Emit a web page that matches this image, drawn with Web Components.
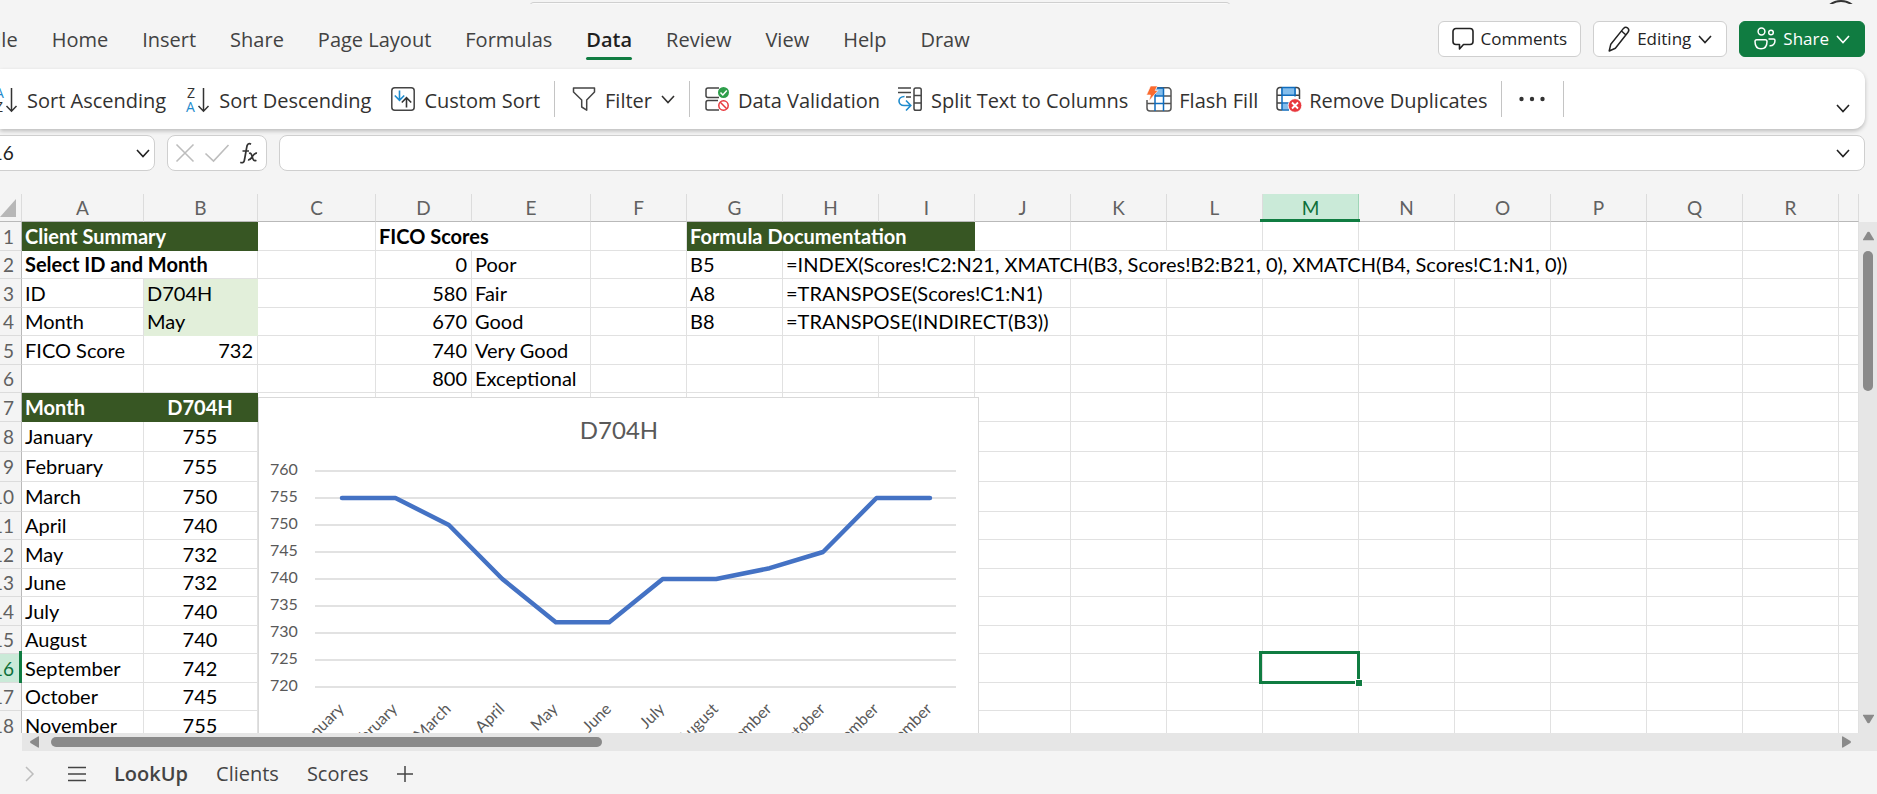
<!DOCTYPE html>
<html lang="en">
<head>
<meta charset="utf-8">
<meta name="viewport" content="width=device-width, initial-scale=1">
<title>Client scores - LookUp</title>
<style>
  html, body { height: 100%; margin: 0; }
  body {
    background: #f4f4f4; color: #323130; overflow: hidden;
    font: 20px/28px "Open Sans", "Noto Sans", sans-serif;
    --accent: #107c41; --line: #e1e1e1; --edge: #cfcfcf;
    --grid-font: Lato, "Liberation Sans", sans-serif;
  }
</style>
</head>
<body>
<workbook-app></workbook-app>

<script>
const make = (tag, html) => customElements.define(tag, class extends HTMLElement {
  constructor() {
    super();
    this.attachShadow({ mode: 'open' });
    this.shadowRoot.innerHTML = html;
  }
});

const ICONS = {
  chevron: '<svg width="14" height="14" viewBox="0 0 14 14"><path d="M1 4l6 6.500 6-6.500" stroke="currentColor" stroke-width="1.600"/></svg>',
  next: '<svg width="12" height="16" viewBox="0 0 12 16"><path d="M2 1l7 7-7 7" stroke="#bdbdbd" stroke-width="1.500"/></svg>',
  menu: '<svg width="18" height="16" viewBox="0 0 18 16"><path d="M0 1.500h18M0 8h18M0 14.500h18" stroke="#444" stroke-width="1.500"/></svg>',
  plus: '<svg width="18" height="18" viewBox="0 0 18 18"><path d="M9 1v16M1 9h16" stroke="#444" stroke-width="1.500"/></svg>',
  cross: '<svg width="20" height="20" viewBox="0 0 20 20"><path d="M1.500 1.500l17 17M18.500 1.500l-17 17" stroke="#bdbdbd" stroke-width="1.600"/></svg>',
  check: '<svg width="26" height="20" viewBox="0 0 26 20"><path d="M1.500 10.500l8 7.500L24.500 2" stroke="#bdbdbd" stroke-width="1.600"/></svg>',
  fx: '<svg width="20" height="24" viewBox="0 0 20 24" stroke="#333"><path d="M12 3.200c-1.500-1-3.200-.6-3.900 1.400-.5 1.400-2.200 13-2.900 15.300-.6 1.900-2.300 2.300-3.900 1.400M3.500 10h6.500" stroke-width="1.700"/><path d="M10 12.500c1.800-.9 2.500.5 3.200 3.200.8 3.200 1.800 4.800 4.200 3.500M18 12.200c-2.200-.4-3.500 1.500-4.700 3.400-1.200 2-2.200 3.800-4.300 3.300" stroke-width="1.700"/></svg>',
  comment: '<svg width="22" height="24" viewBox="0 0 22 24"><path d="M4 1.500h14a3 3 0 0 1 3 3v10a3 3 0 0 1-3 3h-6.500L7.500 22v-4.500H4a3 3 0 0 1-3-3v-10a3 3 0 0 1 3-3z" stroke="#222" stroke-width="1.600" stroke-linejoin="round"/></svg>',
  pencil: '<svg width="22" height="26" viewBox="0 0 22 26"><path d="M1.200 25l1.600-6.800L15.500 2.400c1.200-1.300 3-1.400 4.200-.4 1.200 1.100 1.400 2.800.3 4.200L7.400 22.200zM13.500 5l4.500 4" stroke="#222" stroke-width="1.500" stroke-linejoin="round"/></svg>',
  people: '<svg width="22" height="24" viewBox="0 0 22 24" stroke="#fff" stroke-width="1.500"><circle cx="7.500" cy="4.500" r="3.400"/><circle cx="17" cy="5.500" r="2.300"/><path d="M1 14.500c0-1 .7-1.800 1.800-1.800h8.400c1.100 0 1.800.8 1.800 1.800 0 5-2.500 7.300-6 7.300s-6-2.300-6-7.300zM14.500 12h5c.9 0 1.500.6 1.500 1.500 0 3.200-2 5.500-5.500 5.200"/></svg>',
  asc: '<svg width="24" height="24" viewBox="0 0 24 24"><text x="1" y="11" font-size="14" fill="#1e8bcd">A</text><text x="1" y="25" font-size="14" fill="#333">Z</text><path d="M17.500 1v23M12.500 19l5 5.200 5-5.200" stroke="#333" stroke-width="1.500"/></svg>',
  desc: '<svg width="24" height="24" viewBox="0 0 24 24"><text x="1" y="11" font-size="14" fill="#333">Z</text><text x="0" y="25" font-size="14" fill="#1e8bcd">A</text><path d="M17.500 1v23M12.500 19l5 5.200 5-5.200" stroke="#333" stroke-width="1.500"/></svg>',
  custom: '<svg width="24" height="24" viewBox="0 0 24 24"><rect x=".8" y=".8" width="22.400" height="22.400" rx="3" stroke="#444" stroke-width="1.500"/><path d="M8.500 3.500v9.500M3.800 8.500l4.700 4.800 4.700-4.800" stroke="#1e8bcd" stroke-width="1.600"/><path d="M15.500 20.500V11M10.800 15.500l4.700-4.800 4.700 4.800" stroke="#333" stroke-width="1.600"/></svg>',
  filter: '<svg width="24" height="24" viewBox="0 0 24 24"><path d="M1.500 1h21v4l-7.800 8v10.200l-5-3.200v-7L1.500 5z" stroke="#444" stroke-width="1.500" stroke-linejoin="round"/></svg>',
  validate: '<svg width="24" height="24" viewBox="0 0 24 24"><path d="M14 1H3a2 2 0 0 0-2 2v5.500a2 2 0 0 0 2 2h11M13 13.500H3a2 2 0 0 0-2 2V21a2 2 0 0 0 2 2h11" stroke="#444" stroke-width="1.500"/><circle cx="18.500" cy="5.500" r="5.500" fill="#2e9e4b"/><path d="M15.500 5.500l2.300 2.400 4-4.500" stroke="#fff" stroke-width="1.500"/><circle cx="18.500" cy="18.500" r="4.700" stroke="#e8383d" stroke-width="1.500"/><path d="M15.300 15.300l6.400 6.400" stroke="#e8383d" stroke-width="1.500"/></svg>',
  split: '<svg width="24" height="24" viewBox="0 0 24 24"><path d="M0 1h13M0 5.500h13M8 10h5" stroke="#444" stroke-width="1.500"/><rect x="16" y="1" width="7.200" height="22.200" rx="1.800" stroke="#444" stroke-width="1.500"/><path d="M16 8.500h7M16 16h7" stroke="#444" stroke-width="1.500"/><path d="M6.500 9.500C3 9.500 1 11.500 1 14s2 4.500 5 4.500h6M8 13.500l4.800 5-4.800 5" stroke="#1e8bcd" stroke-width="1.600"/></svg>',
  flash: '<svg width="24" height="26" viewBox="0 0 24 26"><path d="M9 2h8v8H9z" fill="#83bdec"/><path d="M11 1.800h11a3 3 0 0 1 3 3V22a3 3 0 0 1-3 3H4a3 3 0 0 1-3-3v-8M1 17.500h8M17.500 10H25M17.500 17.500H25" stroke="#555" stroke-width="1.500"/><path d="M9 8v17M17.500 2v23M9 10h8.500M9 17.500h8.500M11 2h6" stroke="#0f6cbd" stroke-width="1.500"/><path d="M4.500 0h7L9.200 4.500H12L3 15l1.500-6H.5z" fill="#fa6a2e" stroke="#fff" stroke-width=".6"/></svg>',
  dedupe: '<svg width="24" height="26" viewBox="0 0 24 26"><path d="M5 2h15v7H5zM6 17.500h7v6H6z" fill="#83bdec"/><path d="M6 1.500H4a3 3 0 0 0-3 3V21a3 3 0 0 0 3 3h2M19 1.500h1.500a3 3 0 0 1 3 3V13M1 9.200h5M1 17h5M19 9.200h4" stroke="#444" stroke-width="1.500"/><path d="M6 1.500h13M6 1.500V24M19 1.500v9M6 9.200h13M6 17h7M6 24h7" stroke="#0f6cbd" stroke-width="1.500"/><circle cx="19" cy="19.500" r="6.800" fill="#e8383d" stroke="#fff" stroke-width=".8"/><path d="M16 16.500l6 6M22 16.500l-6 6" stroke="#fff" stroke-width="1.800"/></svg>',
  more: '<svg width="26" height="6" viewBox="0 0 26 6"><g fill="#333"><circle cx="2.500" cy="3" r="2.200"/><circle cx="13" cy="3" r="2.200"/><circle cx="23.500" cy="3" r="2.200"/></g></svg>'
};

customElements.define('ui-icon', class extends HTMLElement {
  constructor() {
    super();
    this.attachShadow({ mode: 'open' });
    this.shadowRoot.innerHTML = `<style>
      :host { display: inline-flex; flex: none; }
      svg { display: block; fill: none; overflow: visible; }
      text { font-family: "Open Sans", sans-serif; }
    </style>${ICONS[this.getAttribute('name')] || ''}`;
  }
});

make('title-strip', `<style>
  :host { display: grid; grid-template-columns: 529fr 702fr 646fr; align-items: end; height: 4px; overflow: hidden; }
  input { grid-column: 2; box-sizing: border-box; width: 100%; height: 36px; border: 1px solid var(--edge);
    border-bottom-width: 2px; border-radius: 5px; background: #fafafa; }
  button { justify-self: end; box-sizing: border-box; width: 38px; height: 38px; margin-right: 17px; padding: 0;
    border: 2px solid #333; border-radius: 50%; background: none; }
</style><input type="search" aria-label="Search"><button type="button" aria-label="Account"></button>`);

make('ribbon-tabs', `<style>
  :host { display: block; min-width: 0; }
  nav { display: flex; gap: 34px; margin-left: -14px; }
  a { position: relative; color: #424242; text-decoration: none; line-height: 38px; white-space: nowrap; }
  a[aria-current] { color: #1f1f1f; font-weight: 600; }
  a[aria-current]::after { content: ""; position: absolute; inset: auto 0 -1px; height: 3px; border-radius: 2px; background: var(--accent); }
</style><nav aria-label="Ribbon tabs">
  <a href="#file">File</a><a href="#home">Home</a><a href="#insert">Insert</a><a href="#share">Share</a><a href="#layout">Page Layout</a><a href="#formulas">Formulas</a><a href="#data" aria-current="page">Data</a><a href="#review">Review</a><a href="#view">View</a><a href="#help">Help</a><a href="#draw">Draw</a>
</nav>`);

make('action-button', `<style>
  :host { display: block; }
  button { box-sizing: border-box; display: flex; align-items: center; gap: 7px; height: 36px; padding: 0 13px;
    border: 1px solid var(--edge); border-radius: 6px; background: #fff; color: #242424;
    font-family: inherit; font-size: 17px; line-height: 24px; white-space: nowrap; }
  :host([menu]) button { padding: 0 14px; }
  :host([primary]) button { background: var(--accent); border-color: var(--accent); color: #fff; }
</style><button type="button"><slot></slot></button>`);

make('ribbon-button', `<style>
  :host { display: block; }
  button { display: flex; align-items: center; gap: 9px; height: 40px; padding: 0 10px; border: 0; background: none;
    color: #323130; font: inherit; white-space: nowrap; }
  :host([compact]) button { padding-left: 8px; }
  span { padding-top: 4px; }
</style><button type="button"><slot name="icon"></slot><span><slot></slot></span><slot name="end"></slot></button>`);

make('ribbon-panel', `<style>
  :host { display: flex; align-items: center; height: 60px; margin-right: 12px; border-radius: 0 12px 12px 0;
    background: #fff; box-shadow: 0 2px 4px rgba(0,0,0,.24); }
  div { display: flex; align-items: center; margin-left: -16px; }
  hr { width: 1px; height: 36px; margin: 0 7px 0 4px; border: 0; background: #c4c4c4; }
  .bare { display: flex; padding: 0 14px 0 10px; border: 0; background: none; color: #222; }
  .collapse { align-self: flex-end; margin: 0 0 14px auto; padding-right: 15px; }
</style>
<div role="toolbar" aria-label="Data">
  <ribbon-button><ui-icon slot="icon" name="asc"></ui-icon>Sort Ascending</ribbon-button>
  <ribbon-button><ui-icon slot="icon" name="desc"></ui-icon>Sort Descending</ribbon-button>
  <ribbon-button><ui-icon slot="icon" name="custom"></ui-icon>Custom Sort</ribbon-button>
  <hr>
  <ribbon-button><ui-icon slot="icon" name="filter"></ui-icon>Filter<ui-icon slot="end" name="chevron"></ui-icon></ribbon-button>
  <hr>
  <ribbon-button compact><ui-icon slot="icon" name="validate"></ui-icon>Data Validation</ribbon-button>
  <ribbon-button compact><ui-icon slot="icon" name="split"></ui-icon>Split Text to Columns</ribbon-button>
  <ribbon-button compact><ui-icon slot="icon" name="flash"></ui-icon>Flash Fill</ribbon-button>
  <ribbon-button compact><ui-icon slot="icon" name="dedupe"></ui-icon>Remove Duplicates</ribbon-button>
  <hr>
  <button class="bare" type="button" aria-label="More options"><ui-icon name="more"></ui-icon></button>
  <hr>
</div>
<button class="bare collapse" type="button" aria-label="Collapse ribbon"><ui-icon name="chevron"></ui-icon></button>`);

make('formula-bar', `<style>
  :host { display: flex; gap: 12px; margin-right: 12px; }
  div { box-sizing: border-box; display: flex; align-items: center; height: 36px; border: 1px solid var(--edge);
    border-radius: 8px; background: #fff; }
  input { flex: 1; min-width: 0; border: 0; outline: 0; background: none; font: 19px/28px var(--grid-font); color: #222; }
  button { display: flex; padding: 0; border: 0; background: none; color: #222; }
  .name { width: 184px; margin-left: -29px; padding-right: 4px; }
  .tools { gap: 9px; padding: 0 7px; }
  .formula { flex: 1; padding: 0 14px 0 10px; }
</style>
<div class="name"><input aria-label="Name box" value="M16"><button type="button" aria-label="Named ranges"><ui-icon name="chevron"></ui-icon></button></div>
<div class="tools"><button type="button" aria-label="Cancel"><ui-icon name="cross"></ui-icon></button><button type="button" aria-label="Enter"><ui-icon name="check"></ui-icon></button><button type="button" aria-label="Insert function"><ui-icon name="fx"></ui-icon></button></div>
<div class="formula"><input aria-label="Formula"><button type="button" aria-label="Expand formula bar"><ui-icon name="chevron"></ui-icon></button></div>`);

const MONTHS = ['January','February','March','April','May','June','July','August','September','October','November','December'];
const SCORES = [755,755,750,740,732,732,740,740,742,745,755,755];

customElements.define('score-chart', class extends HTMLElement {
  constructor() {
    super();
    const x = i => 83 + i * 53.45, y = v => 73 + (760 - v) * 5.4;
    const ticks = [760,755,750,745,740,735,730,725,720];
    this.attachShadow({ mode: 'open' }).innerHTML = `<style>
      :host { display: block; box-sizing: border-box; border: 1px solid #d9d9d9; background: #fff; }
      svg { display: block; }
      text { font-family: var(--grid-font); font-size: 16px; fill: #595959; }
      .title { font-size: 24px; }
    </style>
    <svg width="719" height="396" viewBox="0 0 719 396" role="img" aria-label="D704H scores by month">
      <text class="title" x="360" y="41" text-anchor="middle">D704H</text>
      ${ticks.map(t => `<text x="11" y="${y(t) + 4}">${t}</text><path d="M56 ${y(t)}H697" stroke="#d9d9d9" stroke-width="1.500"/>`).join('')}
      <polyline points="${SCORES.map((s, i) => x(i) + ',' + y(s)).join(' ')}" fill="none" stroke="#4472c4" stroke-width="4.500" stroke-linecap="round" stroke-linejoin="round"/>
      ${MONTHS.map((m, i) => `<text text-anchor="end" transform="translate(${x(i) + 3} 312) rotate(-45)">${m}</text>`).join('')}
    </svg>`;
  }
});

/* Each cell: column letter, text, then optional span and class names. */
const CELLS = {
  1: [['A','Client Summary',2,'dark'],['D','FICO Scores',2,'bold'],['G','Formula Documentation',3,'dark']],
  2: [['A','Select ID and Month',2,'bold'],['D','0',1,'num'],['E','Poor'],['G','B5'],['H','=INDEX(Scores!C2:N21, XMATCH(B3, Scores!B2:B21, 0), XMATCH(B4, Scores!C1:N1, 0))',9]],
  3: [['A','ID'],['B','D704H',1,'pick'],['D','580',1,'num'],['E','Fair'],['G','A8'],['H','=TRANSPOSE(Scores!C1:N1)',3]],
  4: [['A','Month'],['B','May',1,'pick'],['D','670',1,'num'],['E','Good'],['G','B8'],['H','=TRANSPOSE(INDIRECT(B3))',3]],
  5: [['A','FICO Score'],['B','732',1,'num'],['D','740',1,'num'],['E','Very Good']],
  6: [['D','800',1,'num'],['E','Exceptional']],
  7: [['A','Month',1,'dark'],['B','D704H',1,'dark mid']]
};
MONTHS.slice(0, 11).forEach((m, i) => { CELLS[8 + i] = [['A', m], ['B', SCORES[i], 1, 'mid']]; });
const LETTERS = 'ABCDEFGHIJKLMNOPQR'.split('');
const HEIGHTS = [29,28,29,28,29,28,29,30,30,30,28,29,28,29,28,29,28,29];

customElements.define('sheet-grid', class extends HTMLElement {
  constructor() {
    super();
    const widths = [22,122,114,118,96,119].concat(Array(13).fill(96));
    const row = n => {
      let html = `<tr style="height:${HEIGHTS[n - 1]}px"><th scope="row"${n === 16 ? ' class="on"' : ''}><div>${n}</div></th>`;
      for (let i = 0; i < 19;) {
        const c = (CELLS[n] || []).find(k => k[0] === LETTERS[i]);
        if (c) {
          const span = c[2] || 1;
          html += `<td${span > 1 ? ` colspan="${span}"` : ''}${c[3] ? ` class="${c[3]}"` : ''}>${c[1]}</td>`;
          i += span;
        } else {
          html += n === 16 && LETTERS[i] === 'M' ? '<td class="active"><i></i></td>' : '<td></td>';
          i++;
        }
      }
      return html + '</tr>';
    };
    this.attachShadow({ mode: 'open' }).innerHTML = `<style>
      :host { display: block; position: relative; overflow: hidden; min-width: 0; min-height: 0; background: #fff; }
      table { width: 100%; table-layout: fixed; border-collapse: separate; border-spacing: 0;
        font: 20px/27px var(--grid-font); color: #000; }
      th, td { box-sizing: border-box; padding: 0 4px 0 3px; white-space: nowrap; vertical-align: middle;
        border: 0 solid var(--line); border-width: 0 1px 1px 0; text-align: left; }
      th { background: #f4f4f4; color: #616161; font-size: 19px; font-weight: 400; border-color: #dcdcdc; }
      thead th { position: relative; height: 28px; padding: 0; text-align: center; border-bottom-color: #b9b9b9; }
      tbody th { padding: 0; border-right-color: #b9b9b9; position: relative; }
      tbody th div { display: flex; justify-content: flex-end; padding-right: 7px; overflow: hidden; }
      thead svg { display: block; }
      .on { background: #caead8; color: #0e703a; border-right-color: #9fd5b7; }
      thead .on::after { content: ""; position: absolute; inset: auto -2px -1px -3px; height: 3px; background: var(--accent); z-index: 1; }
      tbody .on::after { content: ""; position: absolute; inset: -3px -1px -1px auto; width: 3px; background: var(--accent); z-index: 1; }
      .num { text-align: right; }
      .mid { text-align: center; }
      .bold, .dark { font-weight: 700; }
      .dark { background: #375623; color: #fff; border-color: #375623; }
      .pick { background: #e2efda; border-color: #e2efda; }
      .active { position: relative; }
      .active i { position: absolute; inset: -3px -2px -2px -4px; border: 3px solid var(--accent); }
      .active i::after { content: ""; position: absolute; right: -6px; bottom: -6px; width: 6px; height: 6px;
        background: var(--accent); border: 1px solid #fff; }
      score-chart { position: absolute; top: 203px; left: 258px; }
    </style>
    <table>
      <colgroup>${widths.map(w => `<col style="width:${w}px">`).join('')}<col></colgroup>
      <thead><tr><th aria-label="Select all"><svg width="16" height="18" viewBox="0 0 16 18"><path d="M16 0v18H0z" fill="#b7b7b7"/></svg></th>${LETTERS.map(l => `<th scope="col"${l === 'M' ? ' class="on"' : ''}>${l}</th>`).join('')}<th></th></tr></thead>
      <tbody>${HEIGHTS.map((h, i) => row(i + 1)).join('')}</tbody>
    </table>
    <score-chart></score-chart>`;
  }
});

make('scroll-track', `<style>
  :host { display: flex; align-items: center; background: #e6e6e6; }
  :host([vertical]) { flex-direction: column; }
  button { display: flex; padding: 0; border: 0; background: none; }
  svg { display: block; }
  .rail { flex: 1; align-self: stretch; display: flex; }
  .thumb { border-radius: 5px; background: #8a8a8a; }
  :host(:not([vertical])) { padding: 0 26px 0 8px; }
  :host(:not([vertical])) .rail { margin: 4px 12px; }
  :host(:not([vertical])) .thumb { width: 31%; }
  :host([vertical]) { padding: 8px 0; }
  :host([vertical]) .rail { margin: 9px 4px; flex-direction: column; }
  :host([vertical]) .thumb { height: 31%; }
  :host([vertical]) button svg { transform: rotate(90deg); }
</style>
<button type="button" aria-label="Scroll back"><svg width="9" height="12" viewBox="0 0 9 12"><path d="M9 1v10q0 1-1 .5L.5 7q-.8-1 0-2L8 .5Q9 0 9 1z" fill="#8a8a8a"/></svg></button>
<div class="rail"><div class="thumb"></div></div>
<button type="button" aria-label="Scroll forward"><svg width="9" height="12" viewBox="0 0 9 12"><path d="M0 1v10q0 1 1 .5L8.500 7q.8-1 0-2L1 .5Q0 0 0 1z" fill="#8a8a8a"/></svg></button>`);

make('sheet-tabs', `<style>
  :host { box-sizing: border-box; display: flex; align-items: center; height: 43px; padding: 3px 24px 0; }
  button { display: flex; padding: 0; border: 0; background: none; color: #444; font: inherit; }
  .menu { margin: 0 28px 0 32px; }
  nav { display: flex; gap: 28px; margin-right: 28px; }
  [aria-current] { font-weight: 600; }
</style>
<button type="button" aria-label="Next sheet"><ui-icon name="next"></ui-icon></button>
<button class="menu" type="button" aria-label="All sheets"><ui-icon name="menu"></ui-icon></button>
<nav aria-label="Sheets"><button type="button" aria-current="true">LookUp</button><button type="button">Clients</button><button type="button">Scores</button></nav>
<button type="button" aria-label="New sheet"><ui-icon name="plus"></ui-icon></button>`);

make('workbook-app', `<style>
  :host { display: flex; flex-direction: column; height: 100vh; }
  header { display: flex; align-items: flex-start; justify-content: space-between; padding: 17px 12px 10px 0; }
  .actions { display: flex; gap: 12px; }
  formula-bar { margin-top: 6px; margin-bottom: 23px; }
  main { flex: 1; min-height: 0; display: grid; grid-template: minmax(0, 1fr) 18px / minmax(0, 1fr) 18px; }
  scroll-track[vertical] { margin-top: 28px; }
  .across { grid-column: 1 / 3; margin-left: 22px; }
</style>
<title-strip></title-strip>
<header>
  <ribbon-tabs></ribbon-tabs>
  <div class="actions">
    <action-button><ui-icon name="comment"></ui-icon>Comments</action-button>
    <action-button menu><ui-icon name="pencil"></ui-icon>Editing<ui-icon name="chevron"></ui-icon></action-button>
    <action-button menu primary><ui-icon name="people"></ui-icon>Share<ui-icon name="chevron"></ui-icon></action-button>
  </div>
</header>
<ribbon-panel></ribbon-panel>
<formula-bar></formula-bar>
<main>
  <sheet-grid></sheet-grid>
  <scroll-track vertical></scroll-track>
  <scroll-track class="across"></scroll-track>
</main>
<sheet-tabs></sheet-tabs>`);
</script>
</body>
</html>
